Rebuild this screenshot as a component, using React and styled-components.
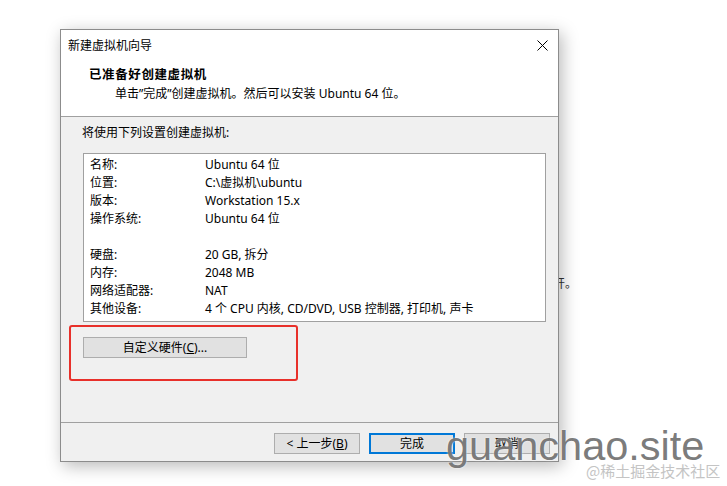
import React from "react";
import styled, { createGlobalStyle } from "styled-components";

const Global = createGlobalStyle`
  html, body { margin: 0; padding: 0; background: #ffffff; }
  body { font-family: "Noto Sans", "Noto Sans CJK SC", sans-serif; }
`;

const uiFont = `"Noto Sans", "Noto Sans CJK SC", sans-serif`;

const Desktop = styled.div`
  position: relative;
  width: 727px;
  height: 486px;
  overflow: hidden;
  background: #ffffff;
`;

/* article text that sits behind the wizard window */
const BackdropLine = styled.div`
  position: absolute;
  left: 517px;
  top: 274px;
  font: 12px/18px "Noto Sans CJK SC", sans-serif;
  color: #333333;
`;

const Window = styled.div`
  position: absolute;
  left: 60px;
  top: 29px;
  width: 499px;
  height: 433px;
  box-sizing: border-box;
  border: 1px solid #8c8c8c;
  background: #f0f0f0;
  box-shadow: 3px 4px 16px rgba(0, 0, 0, 0.28);
  display: flex;
  flex-direction: column;
  font: 12px/18px ${uiFont};
  color: #000;
`;

const Header = styled.div`
  height: 86px;
  background: #ffffff;
  border-bottom: 1px solid #a0a0a0;
  display: flex;
  flex-direction: column;
`;

const TitleBar = styled.div`
  height: 29px;
  display: flex;
  align-items: center;
  justify-content: space-between;
  padding: 1px 10px 0 7px;
`;

const TitleText = styled.span`
  font-size: 12px;
`;

const CloseButton = styled.span`
  display: flex;
  width: 12px;
  height: 12px;
  align-items: center;
  justify-content: center;
`;

const HeaderText = styled.div`
  margin-top: 6px;
  padding-left: 28px;
  display: flex;
  flex-direction: column;
`;

const Heading = styled.div`
  font-weight: 700;
  font-size: 12.5px;
  letter-spacing: 0.6px;
  line-height: 18px;
  height: 19px;
`;

const SubHeading = styled.div`
  padding-left: 26px;
  line-height: 18px;
`;

const Body = styled.div`
  flex: 1;
  padding: 7px 12px 0 21px;
  display: flex;
  flex-direction: column;
  align-items: flex-start;
`;

const Intro = styled.div`
  line-height: 18px;
`;

const SummaryList = styled.div`
  margin-top: 11px;
  margin-left: 1px;
  width: 463px;
  height: 169px;
  box-sizing: border-box;
  border: 1px solid #a0a0a0;
  background: #ffffff;
  padding: 2px 0 0 6px;
`;

const SummaryRow = styled.div`
  display: grid;
  grid-template-columns: 115px 1fr;
  height: 18px;
  line-height: 18px;
  white-space: nowrap;
`;

const PushButton = styled.button`
  box-sizing: border-box;
  height: 21px;
  width: ${(p) => p.$w}px;
  padding: 0;
  font: 12px/1 ${uiFont};
  color: #000;
  background: #e1e1e1;
  border: ${(p) => (p.$default ? "2px solid #0078d7" : "1px solid #adadad")};
  display: flex;
  align-items: center;
  justify-content: center;
`;

const CustomizeButton = styled(PushButton)`
  margin-top: 15px;
  margin-left: 1px;
`;

const Footer = styled.div`
  height: 39px;
  box-sizing: border-box;
  border-top: 1px solid #a0a0a0;
  padding: 10px 8px 0 0;
  display: flex;
  justify-content: flex-end;
  gap: 9px;
`;

const Key = styled.span`
  text-decoration: underline;
`;

/* red highlight drawn over the window */
const Highlight = styled.div`
  position: absolute;
  left: 69px;
  top: 325px;
  width: 229px;
  height: 56px;
  box-sizing: border-box;
  border: 2.5px solid #e8302a;
  border-radius: 3px;
`;

const SiteMark = styled.div`
  position: absolute;
  left: 446px;
  top: 425px;
  font: 41.5px/1 "Liberation Sans", Arial, sans-serif;
  color: rgba(100, 100, 100, 0.85);
  text-shadow: 0 0 2px rgba(255, 255, 255, 0.9);
`;

const SourceMark = styled.div`
  position: absolute;
  left: 586px;
  top: 462px;
  font: 15px/18px "Noto Sans CJK SC", serif;
  color: #c4c4c4;
`;

const rows = [
  ["名称:", "Ubuntu 64 位"],
  ["位置:", "C:\\虚拟机\\ubuntu"],
  ["版本:", "Workstation 15.x"],
  ["操作系统:", "Ubuntu 64 位"],
  ["", ""],
  ["硬盘:", "20 GB, 拆分"],
  ["内存:", "2048 MB"],
  ["网络适配器:", "NAT"],
  ["其他设备:", "4 个 CPU 内核, CD/DVD, USB 控制器, 打印机, 声卡"],
];

export default function App() {
  return (
    <Desktop>
      <Global />
      <BackdropLine>点击打开。</BackdropLine>
      <Window>
        <Header>
          <TitleBar>
            <TitleText>新建虚拟机向导</TitleText>
            <CloseButton>
              <svg width="11" height="11" viewBox="0 0 11 11">
                <path d="M0.5 0.5 L10.5 10.5 M10.5 0.5 L0.5 10.5" stroke="#000" strokeWidth="1" fill="none" />
              </svg>
            </CloseButton>
          </TitleBar>
          <HeaderText>
            <Heading>已准备好创建虚拟机</Heading>
            <SubHeading>单击”完成”创建虚拟机。然后可以安装 Ubuntu 64 位。</SubHeading>
          </HeaderText>
        </Header>
        <Body>
          <Intro>将使用下列设置创建虚拟机:</Intro>
          <SummaryList>
            {rows.map(([k, v], i) => (
              <SummaryRow key={i}>
                <span>{k}</span>
                <span>{v}</span>
              </SummaryRow>
            ))}
          </SummaryList>
          <CustomizeButton $w={164}>
            自定义硬件(<Key>C</Key>)...
          </CustomizeButton>
        </Body>
        <Footer>
          <PushButton $w={86}>
            &lt; 上一步(<Key>B</Key>)
          </PushButton>
          <PushButton $w={86} $default>
            完成
          </PushButton>
          <PushButton $w={86}>取消</PushButton>
        </Footer>
      </Window>
      <Highlight />
      <SiteMark>guanchao.site</SiteMark>
      <SourceMark>@稀土掘金技术社区</SourceMark>
    </Desktop>
  );
}
